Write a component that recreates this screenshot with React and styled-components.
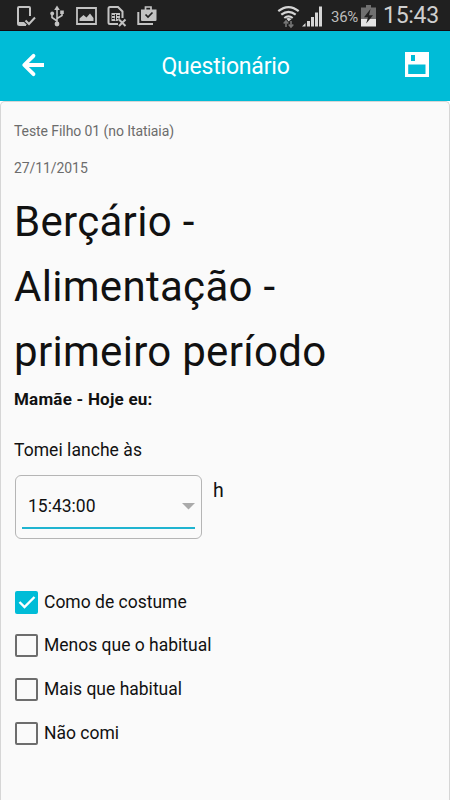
import { useState } from 'react';
import styled, { createGlobalStyle } from 'styled-components';

const options = [
  { id: 1, text: 'Como de costume' },
  { id: 2, text: 'Menos que o habitual' },
  { id: 3, text: 'Mais que habitual' },
  { id: 4, text: 'Não comi' },
];

const StatusIcons = () => {
  return (
    <Notifications>
      <svg width="20" height="22" viewBox="0 0 20 22" fill="none">
        <path d="M14 11V3Q14 2 13 2H3Q2 2 2 3V18.500Q2 20 3.500 20H10" stroke="#c3c3c3" strokeWidth="2" />
        <path d="M2 17H8L11 20H3Z" fill="#c3c3c3" />
        <path d="M9.500 15.500L13 19L19 12.500" stroke="#c3c3c3" strokeWidth="2" />
      </svg>
      <svg width="14" height="22" viewBox="0 0 14 22" fill="none">
        <path d="M7 4V18M7 16L2 12.500V9M7 13.500L12 10.500V7" stroke="#c3c3c3" strokeWidth="1.600" />
        <path d="M7 0.500L9.800 5H4.200Z" fill="#c3c3c3" />
        <circle cx="7" cy="19" r="2.400" fill="#c3c3c3" />
        <circle cx="2.200" cy="8.500" r="1.900" fill="#c3c3c3" />
        <path d="M10.200 5.500H13.800V9H10.200Z" fill="#c3c3c3" />
      </svg>
      <svg width="22" height="22" viewBox="0 0 22 22" fill="none">
        <path d="M1 3H20V19H1Z" stroke="#c3c3c3" strokeWidth="1.800" />
        <path d="M3.500 16V13.500L7.500 10L10.500 12.500L14 8.500L17.500 13V16Z" fill="#c3c3c3" />
      </svg>
      <svg width="20" height="22" viewBox="0 0 20 22" fill="none">
        <path d="M15.500 13V6.500L11 2H3Q1.500 2 1.500 3.500V17.500Q1.500 19 3 19H11" stroke="#c3c3c3" strokeWidth="2" />
        <path d="M4.500 8H13V13L10.500 16H4.500Z" fill="#c3c3c3" />
        <path d="M5 10.500H7.500M5 13.500H7.500M8.500 9V15.500M10 10.500H12.500M10 13.500H11.500" stroke="#202020" strokeWidth="1" />
        <path d="M12 14.500L18.500 21M18.500 14.500L12 21" stroke="#c3c3c3" strokeWidth="2" />
      </svg>
      <svg width="20" height="22" viewBox="0 0 20 22" fill="none">
        <path d="M1.300 7V19H16" stroke="#c3c3c3" strokeWidth="2" />
        <path d="M8.500 5V2H14V5" stroke="#c3c3c3" strokeWidth="1.700" />
        <path d="M4 4.500H19.500V15Q19.500 16 18.500 16H5Q4 16 4 15Z" fill="#c3c3c3" />
        <path d="M8.500 9.500L11 12L15.500 7.500" stroke="#202020" strokeWidth="1.700" />
      </svg>
    </Notifications>
  );
};

const App = () => {
  const [checked, setChecked] = useState([1]);

  const toggle = (id) => {
    setChecked((prev) => (prev.includes(id) ? prev.filter((item) => item !== id) : [...prev, id]));
  };

  return (
    <>
      <GlobalStyle />
      <Screen>
        <StatusBar>
          <StatusIcons />
          <System>
            <svg width="23" height="24" viewBox="0 0 23 24" fill="none">
              <path d="M1.300 6.200Q11.500 -2 21.700 6.200M4.300 9.700Q11.500 4 18.700 9.700M7.300 13Q11.500 9.800 15.700 13" stroke="#d5d5d5" strokeWidth="2.200" />
              <path d="M8.500 14Q11.500 12 14.500 14L11.500 17Z" fill="#d5d5d5" />
              <path d="M9 16V22M6.500 18.500L9 15.500L11.500 18.500M14 15.500V21.500M11.500 19L14 22L16.500 19" stroke="#202020" strokeWidth="3" />
              <path d="M9 16V22M6.700 18.500L9 16L11.300 18.500M14 16V22M11.700 19.500L14 22L16.300 19.500" stroke="#777" strokeWidth="1.600" />
            </svg>
            <Signal viewBox="0 0 21 22">
              <path d="M0 21.500L3.500 18V21.500ZM5 16H8V21.500H5ZM9 12H12V21.500H9ZM13 7.500H16V21.500H13ZM17 1.500H20V21.500H17Z" fill="#d5d5d5" />
            </Signal>
            <Percent>36%</Percent>
            <Battery viewBox="0 0 15 22">
              <path d="M5 0H10V2.500H15V14H0V2.500H5Z" fill="#707070" />
              <path d="M0 14H15V21.500H0Z" fill="#e4e4e4" />
              <path d="M9.500 4L3 12.200H7L5.200 18.500L12 10.200H8Z" fill="#202020" />
            </Battery>
            <Clock>15:43</Clock>
          </System>
        </StatusBar>

        <Header>
          <IconButton type="button" aria-label="Voltar">
            <svg width="24" height="24" viewBox="0 0 24 24" fill="none">
              <path d="M12.500 2.800L3.200 12L12.500 21.200" stroke="#fff" strokeWidth="3.800" strokeLinecap="round" strokeLinejoin="round" />
              <path d="M4 12H23" stroke="#fff" strokeWidth="4" />
            </svg>
          </IconButton>
          <Title>Questionário</Title>
          <IconButton type="button" aria-label="Salvar">
            <svg width="24" height="25" viewBox="0 0 24 25">
              <path fillRule="evenodd" d="M0 0H24V25H0ZM6 3V9H10V3ZM3.200 12.500V22H20.500V12.500Z" fill="#fff" />
            </svg>
          </IconButton>
        </Header>

        <Card>
          <Meta>Teste Filho 01 (no Itatiaia)</Meta>
          <Meta>27/11/2015</Meta>
          <Heading>Berçário - Alimentação - primeiro período</Heading>
          <Subject>Mamãe - Hoje eu:</Subject>
          <Question>Tomei lanche às</Question>
          <TimeRow>
            <SelectBox>
              <SelectField type="button">
                15:43:00
                <svg width="13" height="7" viewBox="0 0 13 7">
                  <path d="M0 0H13L6.500 6.500Z" fill="#aaa" />
                </svg>
              </SelectField>
            </SelectBox>
            <Unit>h</Unit>
          </TimeRow>
          <Options>
            {options.map((item) => {
              const { id, text } = item;
              const isChecked = checked.includes(id);
              return (
                <Option key={id} type="button" role="checkbox" aria-checked={isChecked} onClick={() => toggle(id)}>
                  <Box $checked={isChecked}>
                    {isChecked && (
                      <svg width="18" height="14" viewBox="0 0 18 14" fill="none">
                        <path d="M1.500 7L6.500 12L16.500 2" stroke="#fff" strokeWidth="2.400" />
                      </svg>
                    )}
                  </Box>
                  {text}
                </Option>
              );
            })}
          </Options>
        </Card>
      </Screen>
    </>
  );
};
export default App;

const GlobalStyle = createGlobalStyle`
  * {
    box-sizing: border-box;
  }

  body {
    margin: 0;
    background: #fff;
    font-family: Roboto, sans-serif;
  }

  svg {
    display: block;
    flex-shrink: 0;
  }

  button {
    padding: 0;
    border: 0;
    background: none;
    font: inherit;
    color: inherit;
    cursor: pointer;
  }
`;

const Screen = styled.div`
  display: flex;
  flex-direction: column;
  height: 800px;
  overflow: hidden;
`;

const StatusBar = styled.div`
  display: flex;
  flex-shrink: 0;
  justify-content: space-between;
  height: 31px;
  padding: 5px 11px 0 16px;
  background: #202020;
  border-bottom: 1px solid #140a10;
`;

const Notifications = styled.div`
  display: flex;
  gap: 0 10px;

  svg:nth-child(1) {
    margin-right: 4px;
  }

  svg:nth-child(2) {
    margin-right: 2px;
  }

  svg:nth-child(3) {
    margin-right: -1px;
  }
`;

const System = styled.div`
  display: flex;
`;

const Signal = styled.svg`
  width: 21px;
  height: 22px;
  margin: 0 8px 0 2px;
`;

const Percent = styled.span`
  width: 30px;
  color: #bcbcbc;
  font-size: 15px;
  line-height: 24px;
  letter-spacing: -0.3px;
`;

const Battery = styled.svg`
  width: 15px;
  height: 22px;
  margin-right: 7px;
`;

const Clock = styled.span`
  width: 56px;
  color: #cfcfcf;
  font-size: 23px;
  line-height: 22px;
  letter-spacing: -0.3px;
  white-space: nowrap;
`;

const Header = styled.header`
  display: flex;
  flex-shrink: 0;
  align-items: center;
  justify-content: space-between;
  height: 70px;
  padding: 0 21px;
  background: #00bcd7;
`;

const IconButton = styled.button`
  display: flex;
  margin-bottom: 3px;
`;

const Title = styled.h1`
  margin: 1px 0 0 1px;
  color: #fff;
  font-size: 23px;
  font-weight: 400;
  line-height: 30px;
  letter-spacing: -0.2px;
`;

const Card = styled.main`
  flex: 1;
  padding: 17px 12px 0 13px;
  background: #fafafa;
  border: 1px solid #d6d6d6;
  border-bottom: 0;
  border-radius: 5px 5px 0 0;
  color: #111;
`;

const Meta = styled.p`
  height: 37px;
  margin: 0;
  color: #6c6c6c;
  font-size: 14px;
  line-height: 24px;
  letter-spacing: -0.08px;
`;

const Heading = styled.h2`
  width: 340px;
  margin: -4px 0 0;
  font-size: 42px;
  font-weight: 400;
  line-height: 65px;
  letter-spacing: 0.3px;
`;

const Subject = styled.p`
  margin: 3px 0 0;
  font-size: 17px;
  font-weight: 700;
  line-height: 25px;
  letter-spacing: 0.22px;
`;

const Question = styled.p`
  margin: 26px 0 0;
  font-size: 17.5px;
  line-height: 25px;
  letter-spacing: 0.05px;
`;

const TimeRow = styled.div`
  display: flex;
  gap: 11px;
  margin: 12px 0 0 1px;
`;

const SelectBox = styled.div`
  width: 187px;
  height: 64px;
  padding: 6px 6px;
  border: 1px solid #b5b5b5;
  border-radius: 6px;
`;

const SelectField = styled.button`
  display: flex;
  align-items: center;
  justify-content: space-between;
  width: 100%;
  height: 47px;
  padding: 3px 0 0 6px;
  border-bottom: 2px solid #1fb4d0;
  font-size: 17.5px;
`;

const Unit = styled.span`
  font-size: 19.5px;
  line-height: 32px;
`;

const Options = styled.div`
  display: flex;
  flex-direction: column;
  gap: 20.75px;
  margin: 51.5px 0 0 1px;
`;

const Option = styled.button`
  display: flex;
  align-items: center;
  gap: 6px;
  height: 23px;
  font-size: 17.5px;
  line-height: 21px;
`;

const Box = styled.span`
  display: flex;
  align-items: center;
  justify-content: center;
  width: 23px;
  height: 23px;
  background: ${({ $checked }) => ($checked ? '#00bcd7' : 'transparent')};
  border: ${({ $checked }) => ($checked ? '0' : '2px solid #6d6d6d')};
  border-radius: 2px;
`;
